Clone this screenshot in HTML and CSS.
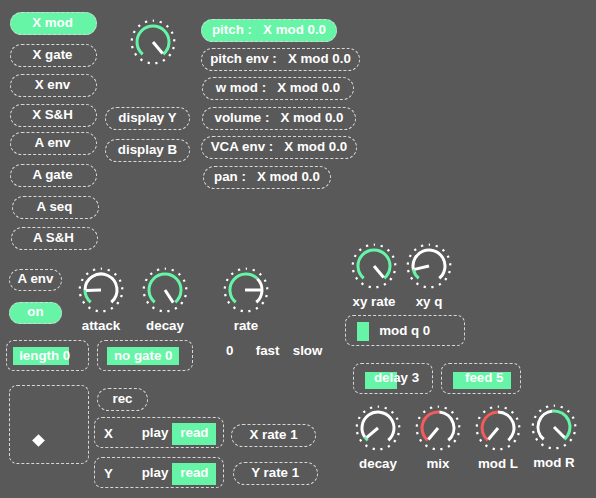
FILE: index.html
```html
<!DOCTYPE html>
<html>
<head>
<meta charset="utf-8">
<title>patch</title>
<link rel="stylesheet" href="styles.css">
</head>
<body>
<div class="canvas">

  <div class="top">
    <div class="toggles">
      <div class="pill tg on">X mod</div>
      <div class="pill tg">X gate</div>
      <div class="pill tg">X env</div>
      <div class="pill tg">X S&amp;H</div>
      <div class="pill tg">A env</div>
      <div class="pill tg">A gate</div>
      <div class="pill tg">A seq</div>
      <div class="pill tg">A S&amp;H</div>
    </div>
    <div class="dispcol">
      <svg class="kn kn-top" viewBox="0 0 50 50" width="50" height="50">
        <circle class="dots" cx="25" cy="25" r="21.3" transform="rotate(-90 25 25)"/>
        <path class="arc g" d="M14.72 37.26A16 16 0 1 1 35.28 37.26"/>
        <line class="needle" x1="25" y1="25" x2="34.64" y2="36.49"/>
      </svg>
      <div class="pill disp dy">display Y</div>
      <div class="pill disp db">display B</div>
    </div>
    <div class="mods">
      <div class="pill mod on m-pitch">pitch :   X mod 0.0</div>
      <div class="pill mod m-penv">pitch env :   X mod 0.0</div>
      <div class="pill mod m-wmod">w mod :   X mod 0.0</div>
      <div class="pill mod m-vol mt1">volume :   X mod 0.0</div>
      <div class="pill mod m-vca">VCA env :   X mod 0.0</div>
      <div class="pill mod m-pan mt1">pan :   X mod 0.0</div>
    </div>
  </div>

  <div class="env">
    <div class="env-r1">
      <div class="envbtns">
        <div class="pill small">A env</div>
        <div class="pill small on onbtn">on</div>
      </div>
      <div class="knob k-attack">
        <svg viewBox="0 0 50 50" width="50" height="50">
          <circle class="dots" cx="25" cy="25" r="21.3" transform="rotate(-90 25 25)"/>
          <path class="arc g" d="M14.72 37.26A16 16 0 0 1 9 25"/>
          <path class="arc" d="M9 25A16 16 0 1 1 35.28 37.26"/>
          <line class="needle" x1="25" y1="25" x2="10.01" y2="25.52"/>
        </svg>
        <div class="lbl">attack</div>
      </div>
      <div class="knob k-decay">
        <svg viewBox="0 0 50 50" width="50" height="50">
          <circle class="dots" cx="25" cy="25" r="21.3" transform="rotate(-90 25 25)"/>
          <path class="arc g" d="M14.72 37.26A16 16 0 1 1 35.28 37.26"/>
          <line class="needle" x1="25" y1="25" x2="33.2" y2="37.6"/>
        </svg>
        <div class="lbl">decay</div>
      </div>
      <div class="knob k-rate">
        <svg viewBox="0 0 50 50" width="50" height="50">
          <circle class="dots" cx="25" cy="25" r="21.3" transform="rotate(-90 25 25)"/>
          <path class="arc g" d="M14.72 37.26A16 16 0 1 1 36.31 13.69"/>
          <path class="arc" d="M36.31 13.69A16 16 0 0 1 35.28 37.26"/>
          <line class="needle" x1="24" y1="25" x2="40.5" y2="25"/>
        </svg>
        <div class="lbl">rate</div>
      </div>
    </div>
    <div class="env-r2">
      <div class="slider s-length">
        <div class="fill" style="width:56px"></div>
        <div class="tv">length 0</div>
      </div>
      <div class="slider s-nogate">
        <div class="fill" style="width:72.5px"></div>
        <div class="tv">no gate 0</div>
      </div>
      <div class="scale">
        <span class="sc0">0</span>
        <span class="sc1">fast</span>
        <span class="sc2">slow</span>
      </div>
    </div>
  </div>

  <div class="xy">
    <div class="xy-knobs">
      <div class="knob">
        <svg viewBox="0 0 50 50" width="50" height="50">
          <circle class="dots" cx="25" cy="25" r="21.3" transform="rotate(-90 25 25)"/>
          <path class="arc g" d="M14.72 37.26A16 16 0 1 1 35.28 37.26"/>
          <line class="needle" x1="25" y1="25" x2="34.64" y2="36.49"/>
        </svg>
        <div class="lbl">xy rate</div>
      </div>
      <div class="knob k-q">
        <svg viewBox="0 0 50 50" width="50" height="50">
          <circle class="dots" cx="25" cy="25" r="21.3" transform="rotate(-90 25 25)"/>
          <path class="arc g" d="M14.72 37.26A16 16 0 0 1 9.41 28.6"/>
          <path class="arc" d="M9.41 28.6A16 16 0 1 1 35.28 37.26"/>
          <line class="needle" x1="25" y1="25" x2="10.38" y2="28.37"/>
        </svg>
        <div class="lbl">xy q</div>
      </div>
    </div>
    <div class="slider s-modq">
      <div class="fill" style="width:12.3px"></div>
      <div class="tv">mod q 0</div>
    </div>
  </div>

  <div class="fx">
    <div class="fx-r1">
      <div class="slider s-delay">
        <div class="fill" style="width:31.7px"></div>
        <div class="tv">delay 3</div>
      </div>
      <div class="slider s-feed">
        <div class="fill" style="width:57.4px"></div>
        <div class="tv">feed 5</div>
      </div>
    </div>
    <div class="fx-r2">
      <div class="knob">
        <svg viewBox="0 0 50 50" width="50" height="50">
          <circle class="dots" cx="25" cy="25" r="21.3" transform="rotate(-90 25 25)"/>
          <path class="arc g" d="M14.72 37.26A16 16 0 0 1 11.89 34.18"/>
          <path class="arc" d="M11.89 34.18A16 16 0 1 1 35.28 37.26"/>
          <line class="needle" x1="25" y1="25" x2="13.51" y2="34.64"/>
        </svg>
        <div class="lbl">decay</div>
      </div>
      <div class="knob k-gap">
        <svg viewBox="0 0 50 50" width="50" height="50">
          <circle class="dots" cx="25" cy="25" r="21.3" transform="rotate(-90 25 25)"/>
          <path class="arc r" d="M14.72 37.26A16 16 0 0 1 26.39 9.06"/>
          <path class="arc" d="M26.39 9.06A16 16 0 0 1 35.28 37.26"/>
          <line class="needle" x1="25" y1="25" x2="15.36" y2="36.49"/>
        </svg>
        <div class="lbl">mix</div>
      </div>
      <div class="knob k-gap">
        <svg viewBox="0 0 50 50" width="50" height="50">
          <circle class="dots" cx="25" cy="25" r="21.3" transform="rotate(-90 25 25)"/>
          <path class="arc r" d="M14.72 37.26A16 16 0 0 1 25 9"/>
          <path class="arc" d="M25 9A16 16 0 0 1 35.28 37.26"/>
          <line class="needle" x1="25" y1="25" x2="15.36" y2="36.49"/>
        </svg>
        <div class="lbl">mod L</div>
      </div>
      <div class="knob k-modr">
        <svg viewBox="0 0 50 50" width="50" height="50">
          <circle class="dots" cx="25" cy="25" r="21.3" transform="rotate(-90 25 25)"/>
          <path class="arc" d="M14.72 37.26A16 16 0 0 1 23.61 9.06"/>
          <path class="arc g" d="M23.61 9.06A16 16 0 0 1 35.28 37.26"/>
          <line class="needle" x1="25" y1="25" x2="35.61" y2="35.61"/>
        </svg>
        <div class="lbl">mod R</div>
      </div>
    </div>
  </div>

  <div class="seq">
    <div class="pad"><div class="handle"></div></div>
    <div class="seqcol">
      <div class="pill recbtn">rec</div>
      <div class="seqrow">
        <div class="pbox">
          <span class="axis">X</span>
          <span class="play">play</span>
          <span class="read">read</span>
        </div>
        <div class="pill ratebtn rx">X rate 1</div>
      </div>
      <div class="seqrow sr2">
        <div class="pbox">
          <span class="axis">Y</span>
          <span class="play">play</span>
          <span class="read">read</span>
        </div>
        <div class="pill ratebtn ry">Y rate 1</div>
      </div>
    </div>
  </div>

</div>
</body>
</html>
```

FILE: styles.css
```css
* { box-sizing: border-box; }
html, body { margin: 0; padding: 0; background: #595959; }

.canvas {
  position: relative;
  width: 596px;
  height: 498px;
  overflow: hidden;
  background: #595959;
  color: #ffffff;
  font: bold 13.33px "Liberation Sans", Arial, sans-serif;
}

/* generic pill toggle / message box */
.pill {
  height: 23px;
  border: 1px dashed #d8d8d8;
  border-radius: 11.5px;
  line-height: 19px;
  text-align: center;
  white-space: pre;
}
.on { background: #66f5a7; }

/* ---------- top section ---------- */
.top {
  position: absolute;
  left: 10px;
  top: 12px;
  display: flex;
  align-items: flex-start;
}
.toggles {
  display: flex;
  flex-direction: column;
  width: 87px;
}
.tg { width: 87px; padding-right: 2px; }
.tg:nth-child(2) { margin-top: 9px; }
.tg:nth-child(3) { margin-top: 7px; }
.tg:nth-child(4) { margin-top: 7px; }
.tg:nth-child(5) { margin-top: 5px; }
.tg:nth-child(6) { margin-top: 9px; }
.tg:nth-child(7) { margin-top: 9px; margin-left: 2px; }
.tg:nth-child(8) { margin-top: 8px; margin-left: 1px; }

.dispcol {
  margin-left: 8px;
  width: 85px;
  display: flex;
  flex-direction: column;
}
.kn-top { display: block; margin-top: 5px; margin-left: 23px; }
.disp { width: 85px; }
.dy { margin-top: 40px; }
.db { margin-top: 9px; }

.mods {
  margin-left: 11px;
  padding-top: 7px;
  display: flex;
  flex-direction: column;
  align-items: flex-start;
  gap: 6px;
}
.mod { padding: 0; }
.m-pitch { width: 136px; }
.m-penv { width: 159px; }
.m-wmod { width: 152px; margin-left: 1px; }
.m-vol { width: 154px; margin-left: 1px; }
.m-vca { width: 156px; }
.m-pan { width: 128px; margin-left: 2px; }
.mt1 { margin-top: 1px; }

/* ---------- knobs ---------- */
.knob {
  display: flex;
  flex-direction: column;
  align-items: center;
  width: 50px;
}
.knob svg { display: block; }
.lbl {
  margin-top: 3px;
  line-height: 16px;
  white-space: nowrap;
}
.dots {
  fill: none;
  stroke: #ffffff;
  stroke-width: 2.2;
  stroke-dasharray: 2.2 5.672;
  stroke-dashoffset: 1.1;
}
.arc { fill: none; stroke: #ffffff; stroke-width: 3; }
.arc.g { stroke: #66f5a7; }
.arc.r { stroke: #f45b5b; }
.needle { stroke: #ffffff; stroke-width: 3; }

/* ---------- sliders ---------- */
.slider {
  height: 31px;
  border: 1px dashed #d8d8d8;
  border-radius: 8px;
  display: grid;
  grid-template-rows: 29px;
}
.slider > * { grid-area: 1 / 1; }
.fill {
  justify-self: start;
  align-self: start;
  margin-top: 5.7px;
  height: 18.3px;
  background: #66f5a7;
}
.tv {
  align-self: center;
  text-align: center;
  line-height: 16px;
  white-space: nowrap;
}

/* ---------- env section ---------- */
.env {
  position: absolute;
  left: 5px;
  top: 265px;
  display: flex;
  flex-direction: column;
}
.env-r1 { display: flex; align-items: flex-start; }
.envbtns {
  margin-left: 4px;
  margin-top: 4px;
  width: 53px;
  display: flex;
  flex-direction: column;
}
.small { width: 53px; height: 22px; line-height: 18px; border-radius: 11px; }
.onbtn { margin-top: 11px; }
.k-attack { margin-left: 14px; }
.k-decay { margin-left: 14px; }
.k-rate { margin-left: 31px; }

.env-r2 {
  margin-top: 6px;
  display: flex;
  align-items: flex-start;
}
.s-length { margin-left: 1px; width: 83px; padding: 0 11.3px 0 5.7px; }
.s-nogate { margin-left: 8px; width: 96px; padding: 0 12.3px 0 8.7px; }
.scale {
  margin-left: 33px;
  margin-top: 3.4px;
  display: flex;
  line-height: 16px;
}
.sc1 { margin-left: 22.3px; }
.sc2 { margin-left: 13.3px; }

/* ---------- xy section ---------- */
.xy {
  position: absolute;
  left: 345px;
  top: 241px;
  display: flex;
  flex-direction: column;
}
.xy-knobs { display: flex; margin-left: 4px; }
.k-q { margin-left: 5px; }
.s-modq { margin-top: 5px; width: 120px; padding: 0 11.3px 0 10.7px; }
.s-modq .fill { height: 19px; }

/* ---------- fx section ---------- */
.fx {
  position: absolute;
  left: 353px;
  top: 363px;
  display: flex;
  flex-direction: column;
}
.fx-r1 { display: flex; }
.s-delay { width: 80px; padding: 0 4px 0 11px; }
.s-feed { margin-left: 8px; width: 80px; padding: 0 4.9px 0 11.3px; }
.s-delay .fill, .s-feed .fill { margin-top: 7.7px; height: 17.3px; }
.s-delay .tv, .s-feed .tv { margin-top: -1.5px; }
.fx-r2 { display: flex; align-items: flex-start; margin-top: 9px; }
.k-gap { margin-left: 10px; }
.k-modr { margin-left: 6px; margin-top: -1px; }

/* ---------- sequencer section ---------- */
.seq {
  position: absolute;
  left: 9px;
  top: 385px;
  display: flex;
  align-items: flex-start;
}
.pad {
  position: relative;
  width: 80px;
  height: 79px;
  border: 1px dashed #d8d8d8;
  border-radius: 8px;
}
.handle {
  position: absolute;
  left: 23.5px;
  top: 49.5px;
  width: 9px;
  height: 9px;
  background: #ffffff;
  transform: rotate(45deg);
}
.seqcol {
  margin-left: 5px;
  display: flex;
  flex-direction: column;
}
.recbtn { width: 51px; margin-left: 3px; margin-top: 3px; }
.seqrow { display: flex; align-items: flex-start; margin-top: 6px; }
.sr2 { margin-top: 9px; }
.pbox {
  width: 130px;
  height: 31px;
  border: 1px dashed #d8d8d8;
  border-radius: 8px;
  display: flex;
  align-items: flex-start;
  padding-left: 9px;
  line-height: 16px;
}
.axis { margin-top: 8px; width: 9px; }
.play { margin-top: 6.5px; margin-left: 28.7px; }
.read {
  margin-top: 5px;
  margin-left: 4px;
  width: 44px;
  height: 22px;
  line-height: 20px;
  text-align: center;
  background: #66f5a7;
}
.ratebtn { width: 85px; }
.rx { margin-left: 7px; margin-top: 7px; }
.ry { margin-left: 8.7px; margin-top: 5px; }
```
